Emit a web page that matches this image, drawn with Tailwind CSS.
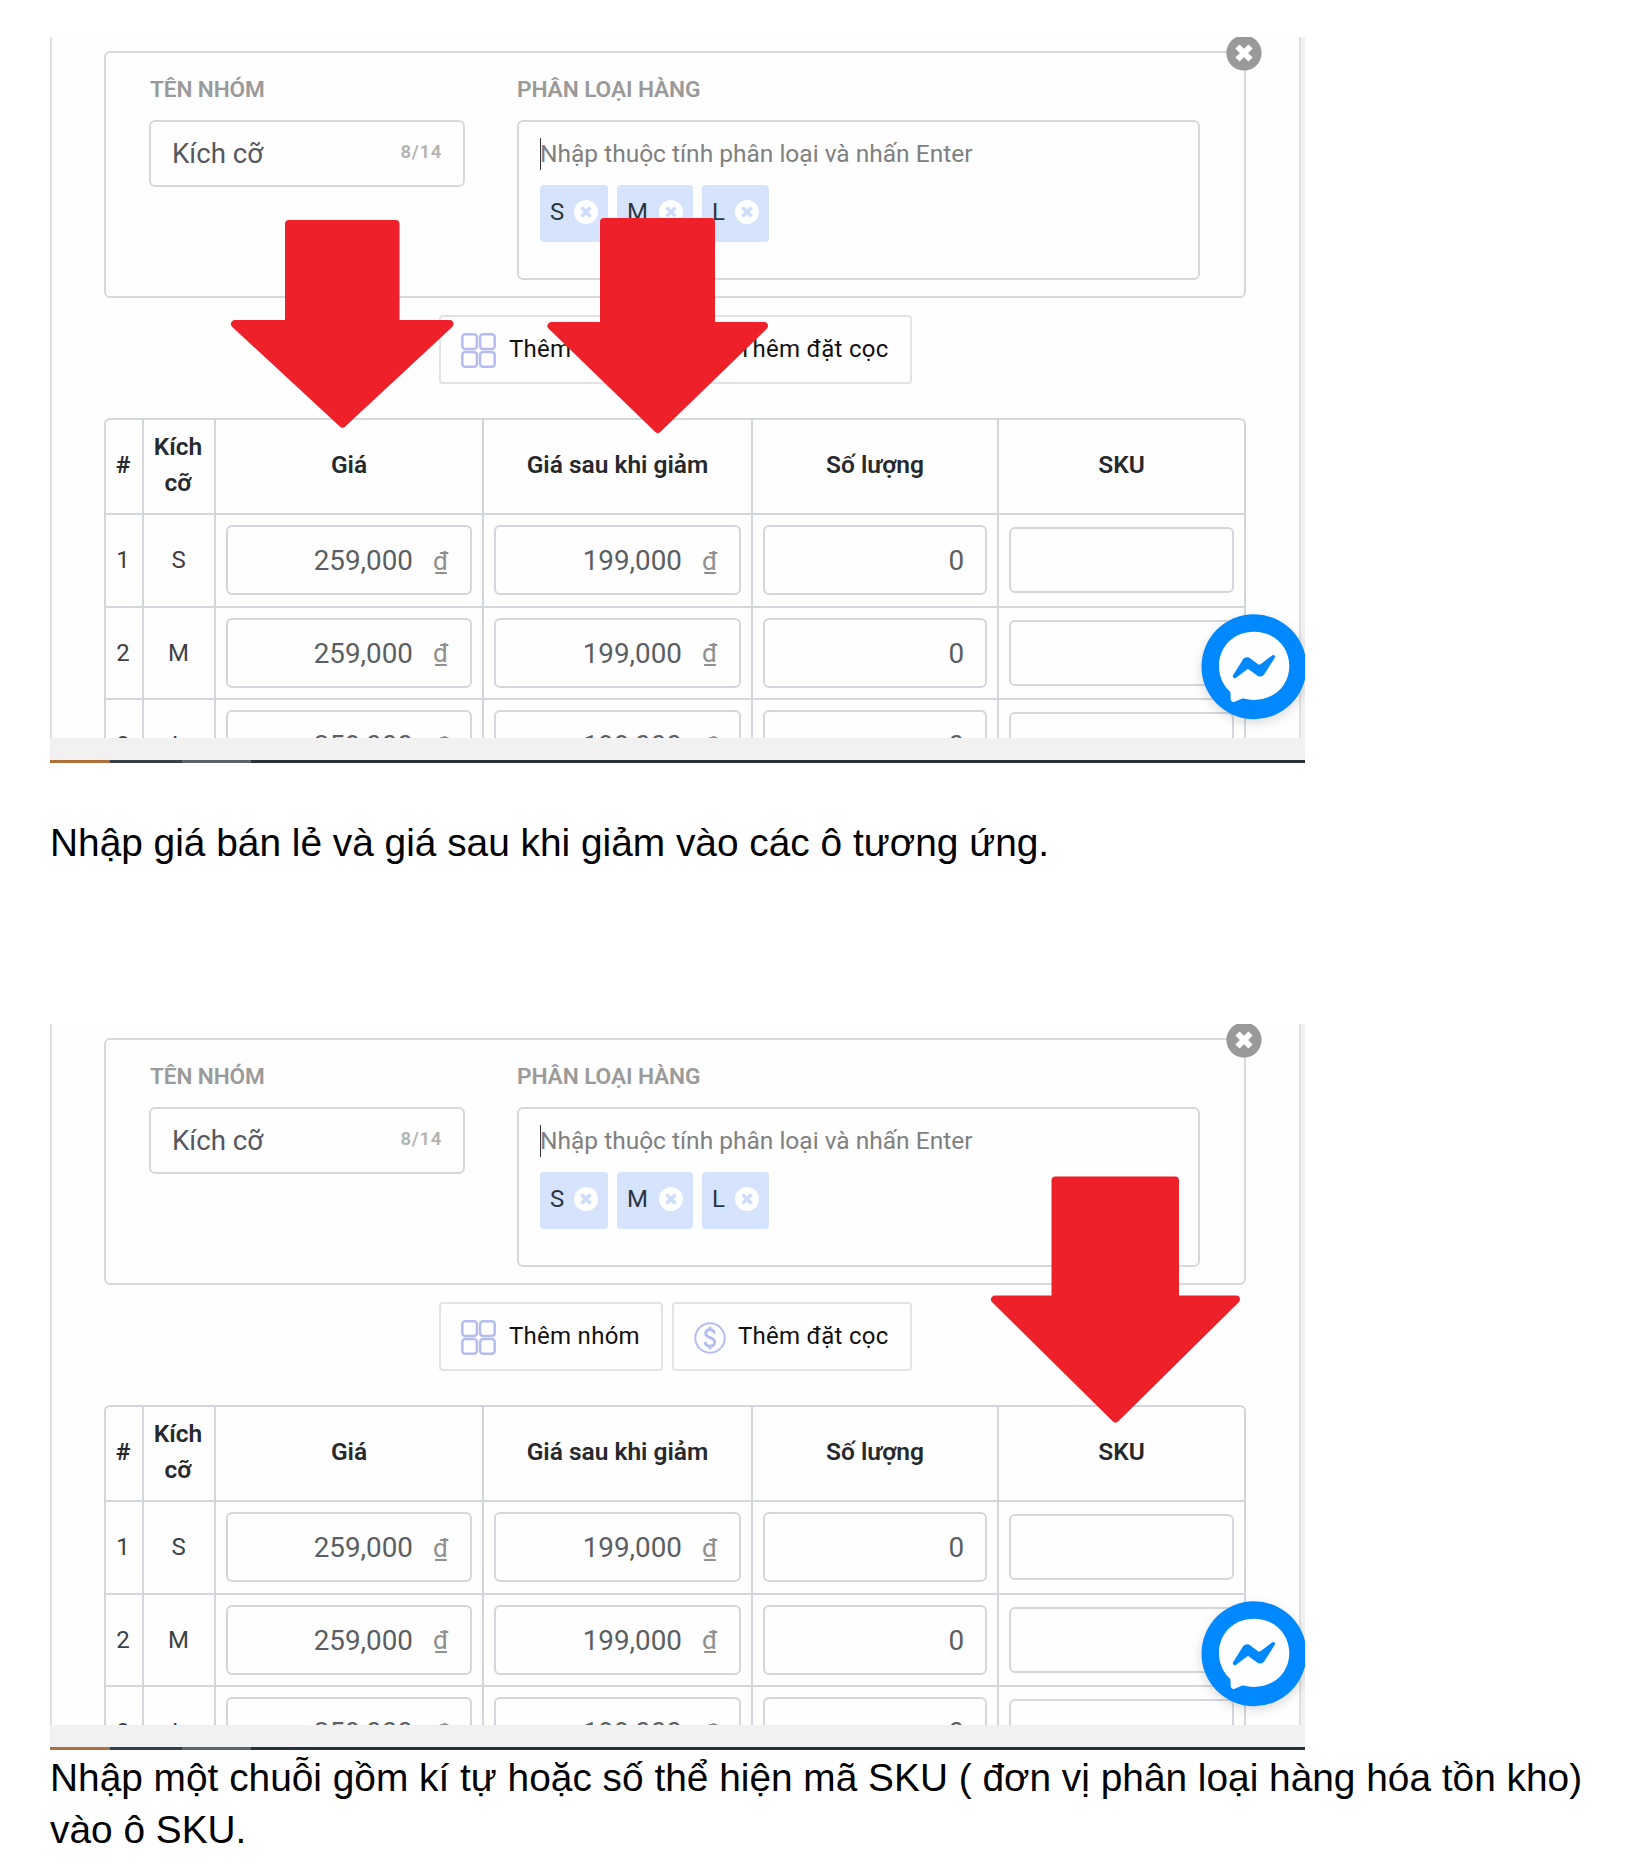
<!DOCTYPE html>
<html lang="vi">
<head>
<meta charset="utf-8">
<title>Hướng dẫn nhập giá và SKU</title>
<script src="https://cdn.jsdelivr.net/npm/@tailwindcss/browser@4"></script>
</head>
<body class="bg-white">
<template id="panel">
  <div class="flex h-[701px] bg-[#fefefe]">
    <div class="flex-1 border-l-2 border-[#dfdfdf] pl-[52px] pt-[14px]">
      <section class="relative flex h-[247px] w-[1142px] rounded-md border-2 border-[#d6d9dc] pl-[43px] pt-[14px]">
        <div class="w-[368px]">
          <div class="flex h-[53px] items-center pb-[7px] pl-px text-[22.6px] font-semibold tracking-[-0.1px] text-[#9a9a9a]">TÊN NHÓM</div>
          <div class="flex h-[67px] w-[316px] items-center justify-between rounded-md border-2 border-[#d6d9dc] pl-[21px] pr-[21px]">
            <span class="text-[27.7px] text-[#55585e]">Kích cỡ</span>
            <span class="pb-[2px] text-[18.5px] font-semibold tracking-[0.7px] text-[#b2b2b2]">8/14</span>
          </div>
        </div>
        <div>
          <div class="flex h-[53px] items-center pb-[7px] text-[22.7px] font-semibold tracking-[-0.1px] text-[#9a9a9a]">PHÂN LOẠI HÀNG</div>
          <div class="h-[160px] w-[683px] rounded-md border-2 border-[#d6d9dc] pl-[21px] pt-[16px]">
            <div class="flex h-[32px] items-center border-l border-[#333] text-[24.5px] text-[#808080]"><span class="-ml-px">Nhập thuộc tính phân loại và nhấn Enter</span></div>
            <div class="mt-[15px] flex gap-[9px] text-[24px] text-[#2b3643]">
              <span class="flex h-[57px] w-[68px] items-center justify-between rounded bg-[#d5e3fd] pl-[10px] pr-[10px] pb-[3px]">S<svg class="size-6" viewBox="0 0 24 24"><circle cx="12" cy="12" r="12" fill="#fff"/><path d="M7.5 7.5l9 9M16.5 7.5l-9 9" stroke="#ccdcfa" stroke-width="3.6"/></svg></span>
              <span class="flex h-[57px] w-[76px] items-center justify-between rounded bg-[#d5e3fd] pl-[10px] pr-[10px] pb-[3px]">M<svg class="size-6" viewBox="0 0 24 24"><circle cx="12" cy="12" r="12" fill="#fff"/><path d="M7.5 7.5l9 9M16.5 7.5l-9 9" stroke="#ccdcfa" stroke-width="3.6"/></svg></span>
              <span class="flex h-[57px] w-[67px] items-center justify-between rounded bg-[#d5e3fd] pl-[10px] pr-[10px] pb-[3px]">L<svg class="size-6" viewBox="0 0 24 24"><circle cx="12" cy="12" r="12" fill="#fff"/><path d="M7.5 7.5l9 9M16.5 7.5l-9 9" stroke="#ccdcfa" stroke-width="3.6"/></svg></span>
            </div>
          </div>
        </div>
        <svg class="absolute -top-[18px] -right-[18px] size-9" viewBox="0 0 36 36"><circle cx="18" cy="18" r="17.600" fill="#999"/><path d="M11.500 11.500l13 13M24.500 11.500l-13 13" stroke="#fff" stroke-width="6"/></svg>
      </section>

      <div class="mt-[17px] ml-[335px] flex gap-[9px] text-[24px] tracking-[0.27px] text-[#111]">
        <div class="flex h-[69px] w-[224px] items-center rounded border-2 border-[#e2e3e6] pl-5">
          <svg class="mr-[13px] mt-[2px] size-[35px]" viewBox="0 0 35 35" fill="none" stroke="#b4bcf2" stroke-width="2.500"><rect x="1.300" y="1.300" width="14.600" height="14.600" rx="3"/><rect x="19.100" y="1.300" width="14.600" height="14.600" rx="3"/><rect x="1.300" y="19.100" width="14.600" height="14.600" rx="3"/><rect x="19.100" y="19.100" width="14.600" height="14.600" rx="3"/></svg>
          <span class="pb-[2px]">Thêm nhóm</span>
        </div>
        <div class="flex h-[69px] w-[240px] items-center rounded border-2 border-[#e2e3e6] pl-5">
          <svg class="mr-[12px] mt-[2px] size-8" viewBox="0 0 32 32" fill="none" stroke="#b4bcf2" stroke-width="2"><circle cx="16" cy="16" r="14.700"/><path stroke-width="2.800" d="M20.500 11.500C20 8.800 18.300 7.600 16 7.600C13.400 7.600 11.600 9 11.600 11.500C11.600 16.600 20.700 14.600 20.700 20C20.700 22.800 18.700 24.200 16 24.200C13.300 24.200 11.500 22.800 11.200 20M16 4.800V8M16 24V27.200"/></svg>
          <span class="pb-[2px]">Thêm đặt cọc</span>
        </div>
      </div>

      <section class="mt-[34px] w-[1142px] rounded-t-md border-2 border-b-0 border-[#d3d7dc] text-[24px] text-[#3d4146]">
        <div class="grid h-[95px] grid-cols-[38px_72px_268px_269px_246px_245px] border-b-2 border-[#d3d7dc] text-center text-[24.5px] font-semibold text-[#26292d]">
          <div class="flex items-center justify-center border-r-2 border-[#d3d7dc] pr-[2px] pb-[3px]">#</div>
          <div class="flex items-center justify-center border-r-2 border-[#d3d7dc] pr-[2px] pb-[3px] leading-[36.5px]">Kích<br>cỡ</div>
          <div class="flex items-center justify-center border-r-2 border-[#d3d7dc] pb-[3px]">Giá</div>
          <div class="flex items-center justify-center border-r-2 border-[#d3d7dc] pb-[3px]">Giá sau khi giảm</div>
          <div class="flex items-center justify-center border-r-2 border-[#d3d7dc] pb-[3px]">Số lượng</div>
          <div class="flex items-center justify-center pb-[3px]">SKU</div>
        </div>
        <div data-rows></div>
      </section>
    </div>
    <div class="w-[6px] border-l-2 border-[#e0e0e0] bg-[#f1f1f1]"></div>
  </div>
  <div class="relative h-[22px] bg-[#f1f1f1]"></div>
  <div class="relative flex h-[3px] bg-[#26323a]">
    <div class="w-[60px] bg-[#b06f38]"></div>
    <div class="w-[72px] bg-[#333f49]"></div>
    <div class="w-[69px] bg-[#59646c]"></div>
  </div>
  <svg class="absolute top-[563px] left-[1137px] h-[134px] w-[134px]" viewBox="0 0 134 134">
    <defs><filter id="soft" x="-30%" y="-30%" width="160%" height="160%"><feGaussianBlur stdDeviation="6"/></filter></defs>
    <circle cx="67" cy="70" r="52" fill="#000" opacity=".16" filter="url(#soft)"/>
    <circle cx="67" cy="66.700" r="52.500" fill="#0088ff"/>
    <path fill="#fff" d="M67 31.700C87.300 31.700 102.300 46.500 102.300 66C102.300 85.500 87.300 100 67 100C63.400 100 59.900 99.500 56.700 98.600C56 98.400 55.300 98.500 54.700 98.700L47.700 101.800C45.800 102.600 43.800 101.300 43.700 99.300L43.500 93C43.500 92.200 43.100 91.500 42.500 91C36 85 32 76.300 32 66C32 46.500 46.700 31.700 67 31.700Z"/>
    <path fill="#0088ff" d="M46.100 75.300L55.900 59.600C57.500 57.200 60.800 56.500 63.100 58.300L71 64.200C71.800 64.700 72.800 64.700 73.500 64.200L85.200 55.400C86.800 54.200 88.900 56.100 87.800 57.800L77.300 74.200C75.700 76.700 72.400 77.300 70.100 75.600L62.200 69.700C61.500 69.200 60.500 69.200 59.800 69.700L48.700 77.900C47.100 79.100 45 77 46.100 75.300Z"/>
  </svg>
</template>

<template id="row">
  <div class="grid h-[92.5px] grid-cols-[38px_72px_268px_269px_246px_245px] border-b-2 border-[#d3d7dc]">
    <div data-no class="flex items-center justify-center border-r-2 border-[#d3d7dc] pr-[2px]"></div>
    <div data-size class="flex items-center justify-center border-r-2 border-[#d3d7dc] pr-px"></div>
    <div class="flex items-center border-r-2 border-[#d3d7dc] px-[10px]"><div class="flex h-[70px] flex-1 items-center justify-end rounded-md border-2 border-[#d3d7dc] pt-[2px] pr-[22px] text-[27.8px] text-[#5b5e63]">259,000<span class="ml-[20px] text-[26px] text-[#8f8f8f]">₫</span></div></div>
    <div class="flex items-center border-r-2 border-[#d3d7dc] px-[10px]"><div class="flex h-[70px] flex-1 items-center justify-end rounded-md border-2 border-[#d3d7dc] pt-[2px] pr-[22px] text-[27.8px] text-[#5b5e63]">199,000<span class="ml-[20px] text-[26px] text-[#8f8f8f]">₫</span></div></div>
    <div class="flex items-center border-r-2 border-[#d3d7dc] px-[10px]"><div class="flex h-[70px] flex-1 items-center justify-end rounded-md border-2 border-[#d3d7dc] pt-[2px] pr-[21px] text-[27.8px] text-[#5b5e63]">0</div></div>
    <div class="flex items-center px-[10px]"><div class="h-[66px] flex-1 rounded-md border-2 border-[#d3d7dc]"></div></div>
  </div>
</template>

<main class="h-[1875px] overflow-hidden pl-[50px] pt-[37px] font-['Liberation_Sans',Arial,sans-serif] text-[38.85px] leading-[51.5px] text-black">
  <div class="relative h-[726px] w-[1255px]">
    <div data-panel class="relative h-full w-full overflow-hidden font-[Roboto,sans-serif] leading-normal"></div>
    <svg class="absolute top-0 left-0 h-full w-full" viewBox="50 37 1255 726" fill="#ee212a" stroke="#ee212a" stroke-width="8" stroke-linejoin="round">
      <path d="M289 224H395.500V324H449.500L342.500 423.500L235 324H289Z"/>
      <path d="M604 222H711V326H764L657.800 429L551.500 326H604Z"/>
    </svg>
  </div>
  <p class="mt-[54px] h-[207px] whitespace-nowrap">Nhập giá bán lẻ và giá sau khi giảm vào các ô tương ứng.</p>
  <div class="relative h-[726px] w-[1255px]">
    <div data-panel class="relative h-full w-full overflow-hidden font-[Roboto,sans-serif] leading-normal"></div>
    <svg class="absolute top-0 left-0 h-full w-full" viewBox="50 1024 1255 726" fill="#ee212a" stroke="#ee212a" stroke-width="8" stroke-linejoin="round">
      <path d="M1055.500 1180.500H1175V1299.500H1236L1115.500 1418.500L995 1299.500H1055.500Z"/>
    </svg>
  </div>
  <p class="mt-[2px] whitespace-nowrap">Nhập một chuỗi gồm kí tự hoặc số thể hiện mã SKU ( đơn vị phân loại hàng hóa tồn kho)<br>vào ô SKU.</p>
</main>

<script>
  const sizes = ['S', 'M', 'L'];
  document.querySelectorAll('[data-panel]').forEach(host => {
    host.append(document.getElementById('panel').content.cloneNode(true));
    sizes.forEach((size, i) => {
      const row = document.getElementById('row').content.cloneNode(true);
      row.querySelector('[data-no]').textContent = i + 1;
      row.querySelector('[data-size]').textContent = size;
      host.querySelector('[data-rows]').append(row);
    });
  });
</script>
</body>
</html>
